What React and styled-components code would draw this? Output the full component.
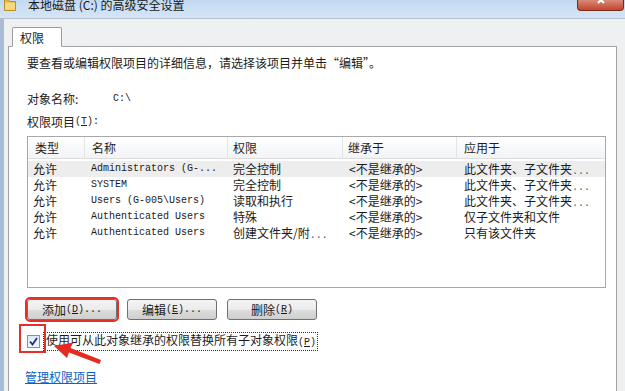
import React from "react";
import styled, { createGlobalStyle } from "styled-components";

const cjk = `"Noto Sans CJK SC", "Noto Sans", sans-serif`;
const mono = `"Liberation Mono", "Noto Sans CJK SC", monospace`;

const GlobalStyle = createGlobalStyle`
  html, body {
    margin: 0;
    padding: 0;
    background: #eef0f2;
  }
  body {
    font-family: ${cjk};
    font-size: 12px;
    color: #1c1c1c;
  }
`;

const Window = styled.div`
  position: relative;
  width: 625px;
  height: 391px;
  overflow: hidden;
  display: flex;
  flex-direction: column;
  background: #eef0f2;
`;

const TitleBar = styled.div`
  height: 18px;
  display: flex;
  align-items: flex-start;
  background: linear-gradient(#c3d9f2, #d5e5f7);
  border-bottom: 1px solid #b4bfcc;
`;

const TitleText = styled.span`
  margin: -3px 0 0 12px;
  line-height: 16px;
  font-size: 12px;
  color: #1a1a1a;
  white-space: nowrap;
`;

const CloseButton = styled.div`
  margin-left: auto;
  margin-right: 1px;
  width: 45px;
  height: 10px;
  display: flex;
  justify-content: center;
  align-items: flex-start;
  background: linear-gradient(#d98a78, #c4452e);
  border: 1px solid #7a2a1c;
  border-top: none;
  border-radius: 0 0 4px 4px;
  overflow: hidden;
`;

const Body = styled.div`
  flex: 1;
  display: flex;
  flex-direction: column;
  border-left: 4px solid #a9bdd7;
  padding: 8px 8px 0 4px;
`;

const Tabs = styled.div`
  display: flex;
  padding-left: 4px;
  margin-bottom: -1px;
  position: relative;
  z-index: 1;
`;

const Tab = styled.div`
  width: 50px;
  height: 20px;
  box-sizing: border-box;
  padding-left: 7px;
  line-height: 19px;
  background: #fff;
  border: 1px solid #9c9c9c;
  border-bottom: 1px solid #fff;
  border-radius: 2px 2px 0 0;
`;

const Panel = styled.div`
  flex: 1;
  display: flex;
  flex-direction: column;
  background: #fff;
  border: 1px solid #a3a3a3;
  border-bottom: none;
  padding: 8px 10px 0 18px;
`;

const Line = styled.div`
  display: flex;
  align-items: center;
  height: 16px;
  line-height: 16px;
  margin-top: ${(p) => p.$top || 0}px;
  white-space: nowrap;
`;

const Label = styled.span`
  width: 86px;
`;

const Mono = styled.span`
  font-family: ${mono};
  font-size: 10px;
`;

const Key = styled.span`
  font-family: ${mono};
  font-size: 10px;
  text-decoration: underline;
`;

const ListBox = styled.div`
  margin-top: 6px;
  height: 152px;
  box-sizing: border-box;
  border: 1px solid #a8a8a8;
  display: flex;
  flex-direction: column;
`;

const Columns = styled.div`
  display: grid;
  grid-template-columns: 57px 143px 115px 114px 1fr;
`;

const HeaderRow = styled(Columns)`
  height: 22px;
  box-sizing: border-box;
  background: linear-gradient(#ffffff, #f3f4f6);
  border-bottom: 1px solid #dcdcdc;
`;

const HeaderCell = styled.div`
  padding-left: ${(p) => p.$pad}px;
  line-height: 22px;
  color: #1e1e1e;
  border-right: 1px solid #e2e3e5;
  &:last-child {
    border-right: none;
  }
`;

const Rows = styled.div`
  padding-top: 2px;
`;

const Row = styled(Columns)`
  height: 16px;
  line-height: 16px;
  background: ${(p) => (p.$selected ? "#ededed" : "transparent")};
`;

const Cell = styled.div`
  padding-left: ${(p) => p.$pad}px;
  white-space: nowrap;
  overflow: hidden;
  font-family: ${(p) => (p.$mono ? mono : cjk)};
  font-size: ${(p) => (p.$mono ? "10px" : "12px")};
  color: #1a1a1a;
`;

const Dots = styled.span`
  font-family: ${mono};
  font-size: 10px;
  color: #555;
`;

const ButtonRow = styled.div`
  display: flex;
  gap: 10px;
  margin-top: 11px;
`;

const Button = styled.div`
  width: 90px;
  height: 21px;
  box-sizing: border-box;
  display: flex;
  align-items: center;
  justify-content: center;
  border: 1px solid #707070;
  border-radius: 3px;
  background: linear-gradient(#f4f4f4 0%, #ebebeb 50%, #dddddd 51%, #cfcfcf 100%);
  color: #1a1a1a;
  white-space: nowrap;
  outline: ${(p) => (p.$marked ? "2px solid #e5302a" : "none")};
  outline-offset: 0;
`;

const CheckRow = styled.div`
  display: flex;
  align-items: center;
  margin-top: 13px;
  height: 16px;
`;

const CheckWrap = styled.div`
  position: relative;
  width: 13px;
  height: 13px;
  &::after {
    content: "";
    position: absolute;
    left: -8px;
    top: -11px;
    width: 27px;
    height: 29px;
    box-sizing: border-box;
    border: 2px solid #e5302a;
  }
`;

const CheckBox = styled.div`
  width: 13px;
  height: 13px;
  box-sizing: border-box;
  border: 1px solid #8a8f99;
  background: linear-gradient(#dfe9f5, #f4f8fc);
  display: flex;
  align-items: center;
  justify-content: center;
`;

const CheckLabel = styled.span`
  margin-left: 3px;
  padding: 0 1px 0 2px;
  line-height: 14px;
  border: 1px dotted #333;
  white-space: nowrap;
`;

const Link = styled.a`
  margin-top: 20px;
  margin-left: -2px;
  line-height: 16px;
  color: #0a64c8;
  text-decoration: underline;
  align-self: flex-start;
`;

const ArrowLayer = styled.svg`
  position: absolute;
  left: 0;
  top: 0;
  pointer-events: none;
`;

const FolderIcon = () => (
  <svg width="12" height="12" viewBox="0 0 12 12" style={{ marginLeft: 4, marginTop: -1 }}>
    <path d="M0.5 1 h4 l1 1.5 h6 v9 h-11 z" fill="#e8c25a" stroke="#b88d2a" strokeWidth="1" />
    <path d="M1 4 h10 v7 h-10 z" fill="#f6d97a" />
  </svg>
);

const rowsData = [
  ["允许", "Administrators (G-...", "完全控制", "<不是继承的>", "此文件夹、子文件夹", true],
  ["允许", "SYSTEM", "完全控制", "<不是继承的>", "此文件夹、子文件夹", true],
  ["允许", "Users (G-005\\Users)", "读取和执行", "<不是继承的>", "此文件夹、子文件夹", true],
  ["允许", "Authenticated Users", "特殊", "<不是继承的>", "仅子文件夹和文件", false],
  ["允许", "Authenticated Users", "创建文件夹/附", "<不是继承的>", "只有该文件夹", false],
];

export default function App() {
  return (
    <>
      <GlobalStyle />
      <Window>
        <TitleBar>
          <FolderIcon />
          <TitleText>本地磁盘 (C:) 的高级安全设置</TitleText>
          <CloseButton>
            <svg width="10" height="6" viewBox="0 0 10 6">
              <path d="M1 -3 L7 3 M7 -3 L1 3" stroke="#fff" strokeWidth="2" transform="translate(1,0)" />
            </svg>
          </CloseButton>
        </TitleBar>
        <Body>
          <Tabs>
            <Tab>权限</Tab>
          </Tabs>
          <Panel>
            <Line>要查看或编辑权限项目的详细信息，请选择该项目并单击“编辑”。</Line>
            <Line $top={20}>
              <Label>对象名称:</Label>
              <Mono>C:\</Mono>
            </Line>
            <Line $top={7}>
              权限项目<Mono>(</Mono><Key>T</Key><Mono>):</Mono>
            </Line>
            <ListBox>
              <HeaderRow>
                <HeaderCell $pad={7}>类型</HeaderCell>
                <HeaderCell $pad={7}>名称</HeaderCell>
                <HeaderCell $pad={5}>权限</HeaderCell>
                <HeaderCell $pad={5}>继承于</HeaderCell>
                <HeaderCell $pad={7}>应用于</HeaderCell>
              </HeaderRow>
              <Rows>
                {rowsData.map(([type, name, perm, inh, applies, more], i) => (
                  <Row key={i} $selected={i === 0}>
                    <Cell $pad={5}>{type}</Cell>
                    <Cell $pad={6} $mono>{name}</Cell>
                    <Cell $pad={5}>
                      {perm}
                      {perm.endsWith("附") && <Dots>...</Dots>}
                    </Cell>
                    <Cell $pad={6}>{inh}</Cell>
                    <Cell $pad={7}>
                      {applies}
                      {more && <Dots>...</Dots>}
                    </Cell>
                  </Row>
                ))}
              </Rows>
            </ListBox>
            <ButtonRow>
              <Button $marked>
                添加<Mono>(</Mono><Key>D</Key><Mono>)...</Mono>
              </Button>
              <Button>
                编辑<Mono>(</Mono><Key>E</Key><Mono>)...</Mono>
              </Button>
              <Button>
                删除<Mono>(</Mono><Key>R</Key><Mono>)</Mono>
              </Button>
            </ButtonRow>
            <CheckRow>
              <CheckWrap>
                <CheckBox>
                  <svg width="9" height="9" viewBox="0 0 9 9">
                    <path d="M1 4.5 L3.5 7.5 L8 1" fill="none" stroke="#1c2f8a" strokeWidth="1.8" />
                  </svg>
                </CheckBox>
              </CheckWrap>
              <CheckLabel>
                使用可从此对象继承的权限替换所有子对象权限<Mono>(</Mono><Key>P</Key><Mono>)</Mono>
              </CheckLabel>
            </CheckRow>
            <Link href="#">管理权限项目</Link>
          </Panel>
        </Body>
        <ArrowLayer width="625" height="391" viewBox="0 0 625 391">
          <polygon
            points="54,346 73,342.5 70.5,348 101,360 99.5,364 69,352.5 67,358"
            fill="#e62a22"
          />
        </ArrowLayer>
      </Window>
    </>
  );
}
